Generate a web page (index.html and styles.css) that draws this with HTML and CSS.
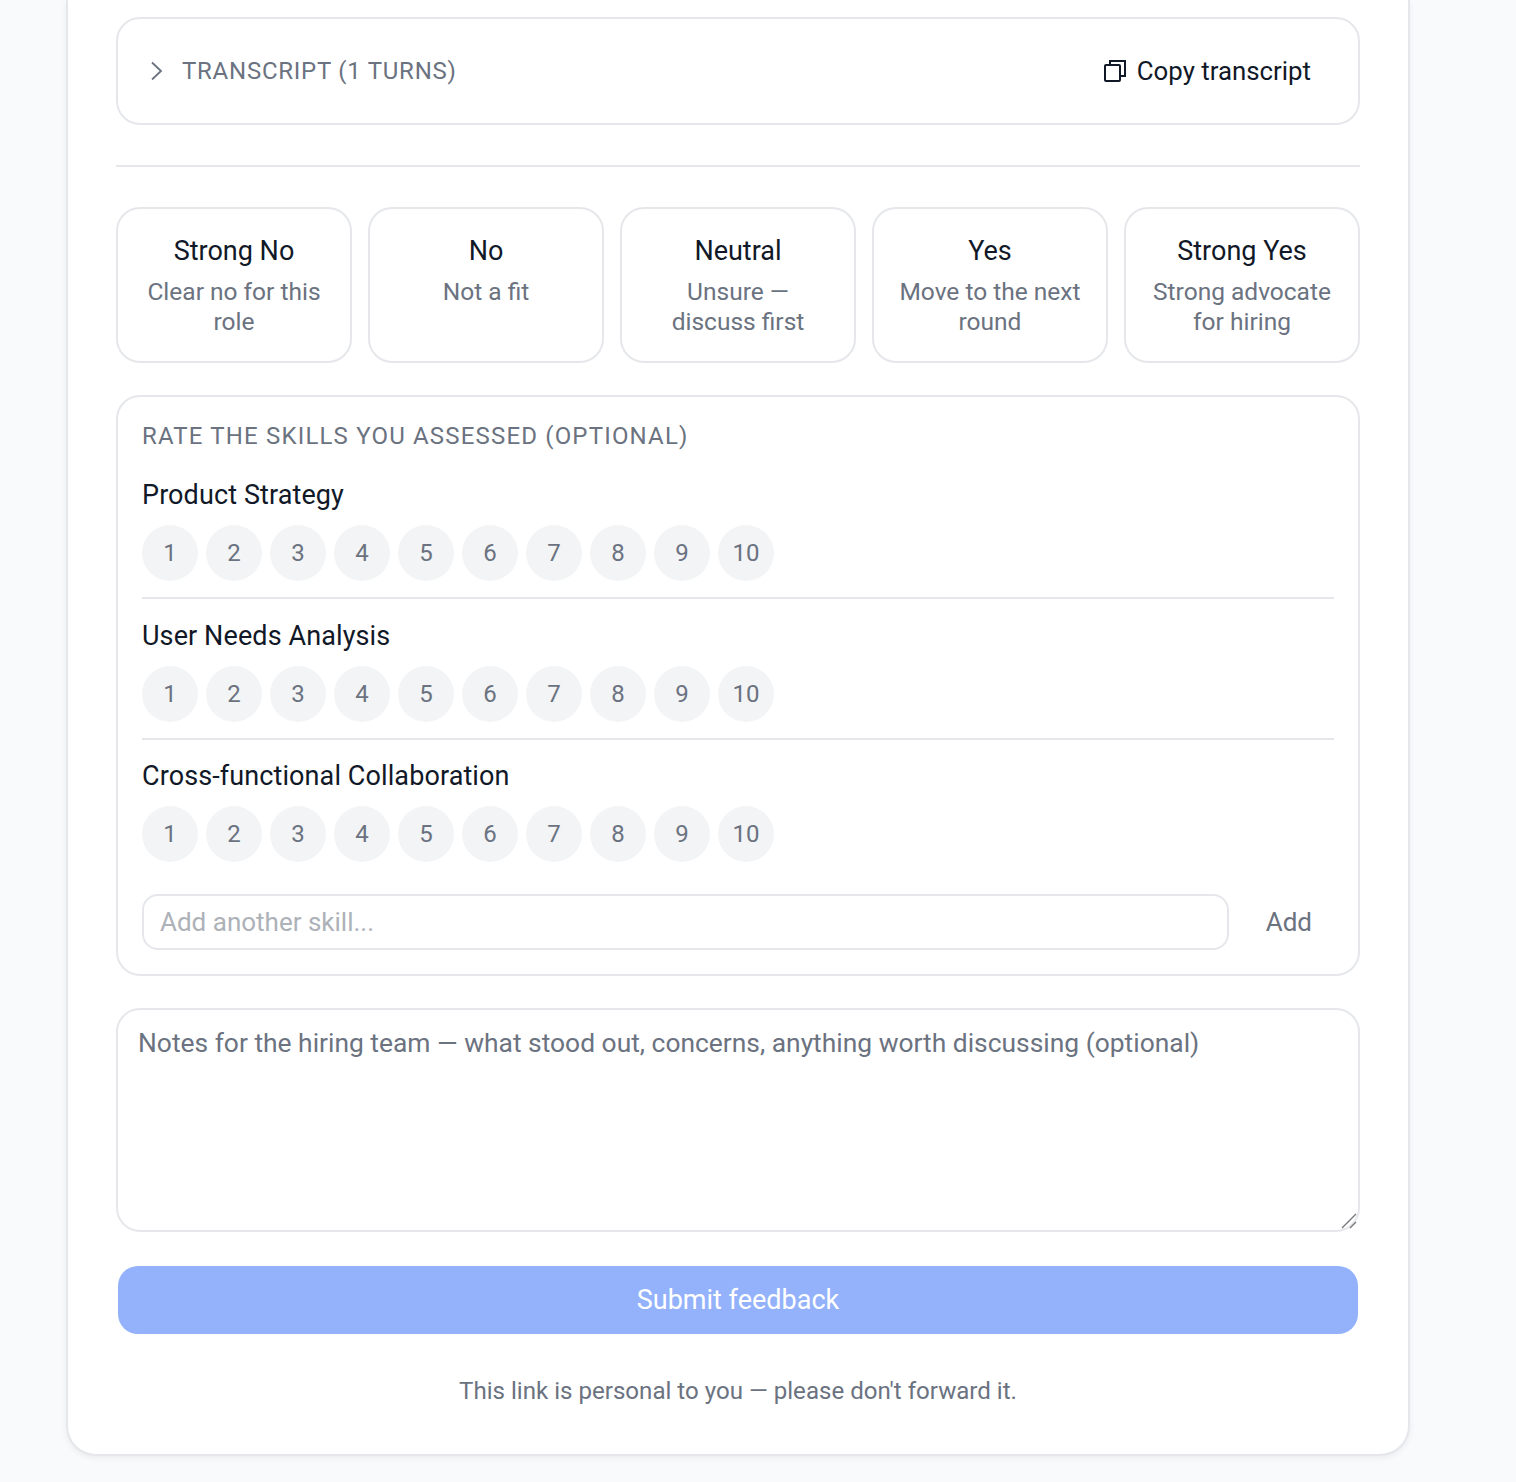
FILE: index.html
```html
<!DOCTYPE html>
<html lang="en">
<head>
  <meta charset="UTF-8">
  <meta name="viewport" content="width=device-width, initial-scale=1.0">
  <title>Interview feedback</title>
  <link rel="stylesheet" href="styles.css">
</head>
<body>
  <div class="card">
    <div class="transcript">
      <div class="transcript-toggle">
        <svg class="chevron" width="14" height="20" viewBox="0 0 14 20"><path d="M2 1.5 L11 10 L2 18.5" fill="none" stroke="#6b7280" stroke-width="1.8"/></svg>
        <span>TRANSCRIPT (1 TURNS)</span>
      </div>
      <button class="copy-btn">
        <svg width="22" height="22" viewBox="0 0 22 22" fill="none" stroke="#111827" stroke-width="2"><rect x="1" y="5" width="15" height="16" rx="1"/><path d="M6 5 V1 H21 V16 H16"/></svg>
        Copy transcript
      </button>
    </div>

    <hr class="divider">

    <div class="ratings">
      <button class="rating"><strong>Strong No</strong><span>Clear no for this role</span></button>
      <button class="rating"><strong>No</strong><span>Not a fit</span></button>
      <button class="rating"><strong>Neutral</strong><span>Unsure — discuss first</span></button>
      <button class="rating"><strong>Yes</strong><span>Move to the next round</span></button>
      <button class="rating"><strong>Strong Yes</strong><span>Strong advocate for hiring</span></button>
    </div>

    <div class="skills">
      <div class="skills-title">RATE THE SKILLS YOU ASSESSED (OPTIONAL)</div>
      <div class="skill">
        <div class="skill-name">Product Strategy</div>
        <div class="scores">
          <button>1</button><button>2</button><button>3</button><button>4</button><button>5</button><button>6</button><button>7</button><button>8</button><button>9</button><button>10</button>
        </div>
      </div>
      <div class="skill">
        <div class="skill-name">User Needs Analysis</div>
        <div class="scores">
          <button>1</button><button>2</button><button>3</button><button>4</button><button>5</button><button>6</button><button>7</button><button>8</button><button>9</button><button>10</button>
        </div>
      </div>
      <div class="skill last">
        <div class="skill-name">Cross-functional Collaboration</div>
        <div class="scores">
          <button>1</button><button>2</button><button>3</button><button>4</button><button>5</button><button>6</button><button>7</button><button>8</button><button>9</button><button>10</button>
        </div>
      </div>
      <div class="add-skill">
        <input type="text" placeholder="Add another skill...">
        <button>Add</button>
      </div>
    </div>

    <div class="notes-wrap">
      <textarea class="notes" placeholder="Notes for the hiring team — what stood out, concerns, anything worth discussing (optional)"></textarea>
      <svg class="grip" width="16" height="16" viewBox="0 0 16 16"><path d="M1 15 L15 1 M9 15 L15 9" stroke="#77777c" stroke-width="1.4" fill="none"/></svg>
    </div>

    <button class="submit">Submit feedback</button>
    <p class="footnote">This link is personal to you — please don't forward it.</p>
  </div>
</body>
</html>
```

FILE: styles.css
```css
* {
  box-sizing: border-box;
}
html, body {
  height: 1482px;
  overflow: hidden;
}
body {
  font-family: Roboto, sans-serif;
  background-color: #f9fafb;
  margin: 0;
  padding: 0 106px 26px 66px;
  color: #111827;
}
button {
  font-family: inherit;
  cursor: pointer;
}
.card {
  height: 1456px;
  background: white;
  border: 2px solid #e5e7eb;
  border-top: none;
  border-radius: 0 0 30px 30px;
  box-shadow: 0 2px 6px rgba(0, 0, 0, 0.06);
  padding: 17px 48px 0;
}
.transcript {
  height: 108px;
  border: 2px solid #e5e7eb;
  border-radius: 24px;
  display: flex;
  align-items: center;
  justify-content: space-between;
  padding: 0 47px 0 32px;
}
.transcript-toggle {
  display: flex;
  align-items: center;
  gap: 18px;
  font-size: 24px;
  letter-spacing: 0.75px;
  color: #6b7280;
}
.copy-btn {
  display: flex;
  align-items: center;
  gap: 11px;
  background: none;
  border: none;
  padding: 0;
  font-size: 25.8px;
  color: #111827;
}
.divider {
  border: none;
  border-top: 2px solid #e5e7eb;
  margin: 40px 0;
}
.ratings {
  display: grid;
  grid-template-columns: repeat(5, 1fr);
  gap: 16px;
}
.rating {
  height: 156px;
  background: white;
  border: 2px solid #e5e7eb;
  border-radius: 24px;
  padding: 24px 22px 0;
  display: flex;
  flex-direction: column;
  align-items: center;
  justify-content: flex-start;
  text-align: center;
}
.rating strong {
  font-weight: 400;
  font-size: 27px;
  line-height: 36px;
  color: #111827;
  margin-bottom: 8px;
}
.rating span {
  font-size: 24.5px;
  line-height: 30px;
  color: #6b7280;
}
.skills {
  margin-top: 32px;
  height: 581px;
  border: 2px solid #e5e7eb;
  border-radius: 24px;
  padding: 24px 24px 0;
}
.skills-title {
  font-size: 24px;
  line-height: 30px;
  letter-spacing: 1.18px;
  color: #6b7280;
  margin-bottom: 26px;
}
.skill {
  border-bottom: 2px solid #e5e7eb;
  padding-bottom: 16px;
  margin-bottom: 18.5px;
}
.skill.last {
  border-bottom: none;
  padding-bottom: 0;
  margin-bottom: 32px;
}
.skill-name {
  font-size: 27px;
  letter-spacing: 0.1px;
  line-height: 36px;
  margin-bottom: 12px;
}
.scores {
  display: flex;
  gap: 8px;
}
.scores button {
  width: 56px;
  height: 56px;
  border: none;
  border-radius: 50%;
  background-color: #f3f4f6;
  color: #6b7280;
  font-size: 24px;
  padding: 0;
}
.add-skill {
  display: flex;
  align-items: center;
}
.add-skill input {
  flex: 1;
  height: 56px;
  border: 2px solid #e5e7eb;
  border-radius: 16px;
  padding: 0 16px;
  font-family: inherit;
  font-size: 26px;
  outline: none;
}
.add-skill input::placeholder {
  color: #adb1b8;
}
.add-skill button {
  width: 105px;
  background: none;
  border: none;
  padding: 0 22px 0 0;
  text-align: right;
  font-size: 26px;
  color: #6b7280;
}
.notes-wrap {
  position: relative;
  margin-top: 32px;
}
.notes {
  display: block;
  width: 100%;
  height: 224px;
  border: 2px solid #e5e7eb;
  border-radius: 24px;
  padding: 15px 20px;
  font-family: inherit;
  font-size: 26.4px;
  line-height: 36px;
  outline: none;
  resize: none;
}
.notes::placeholder {
  color: #6b7280;
}
.grip {
  position: absolute;
  right: 3px;
  bottom: 3px;
}
.submit {
  display: block;
  width: 1240px;
  height: 68px;
  margin: 34px 2px 0;
  border: none;
  border-radius: 20px;
  background-color: #93b2fb;
  color: white;
  font-size: 27px;
}
.footnote {
  margin: 42px 0 0;
  text-align: center;
  font-size: 24.1px;
  line-height: 30px;
  color: #6b7280;
}
```
